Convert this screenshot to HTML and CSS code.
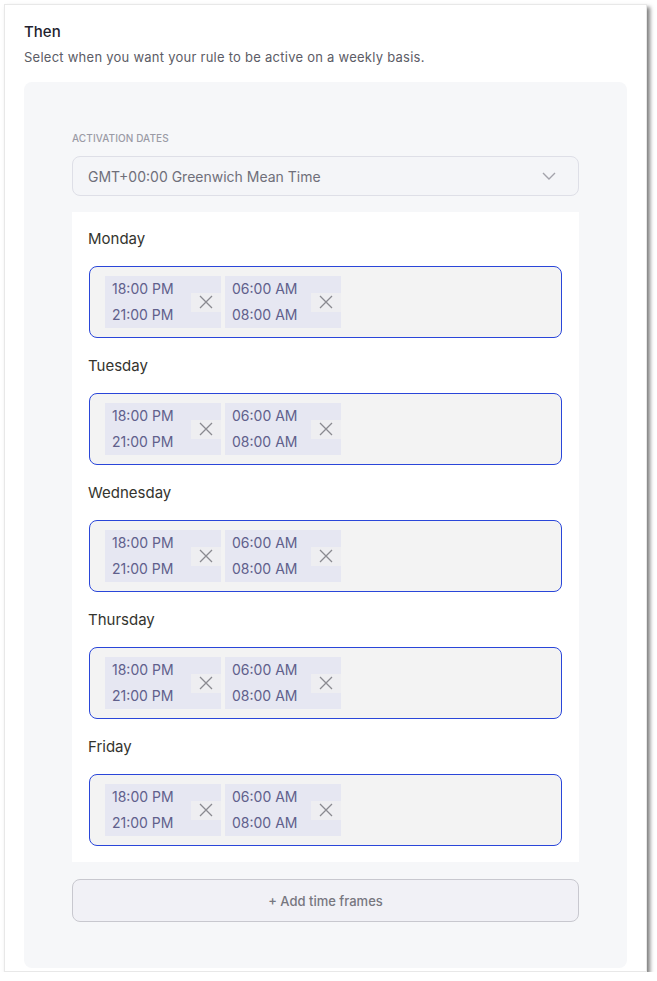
FILE: index.html
```html
<!DOCTYPE html>
<html>
<head>
<meta charset="utf-8">
<link rel="stylesheet" href="styles.css">
</head>
<body>
<div class="card">
  <h1 class="title">Then</h1>
  <p class="subtitle">Select when you want your rule to be active on a weekly basis.</p>
  <div class="panel">
    <div class="label">ACTIVATION DATES</div>
    <div class="select">
      <span>GMT+00:00 Greenwich Mean Time</span>
      <svg class="chev" width="14" height="8" viewBox="0 0 14 8"><path d="M1 1 L7 7 L13 1" fill="none" stroke="#a3a3ab" stroke-width="1.4"/></svg>
    </div>
    <div class="days">
      <div class="day">
        <div class="day-name">Monday</div>
        <div class="slots">
          <div class="chip"><div class="times"><span>18:00 PM</span><span>21:00 PM</span></div><span class="x"><svg width="14" height="14" viewBox="0 0 14 14"><path d="M1 1L13 13M13 1L1 13" stroke="#8a8a90" stroke-width="1.3"/></svg></span></div>
          <div class="chip"><div class="times"><span>06:00 AM</span><span>08:00 AM</span></div><span class="x"><svg width="14" height="14" viewBox="0 0 14 14"><path d="M1 1L13 13M13 1L1 13" stroke="#8a8a90" stroke-width="1.3"/></svg></span></div>
        </div>
      </div>
      <div class="day">
        <div class="day-name">Tuesday</div>
        <div class="slots">
          <div class="chip"><div class="times"><span>18:00 PM</span><span>21:00 PM</span></div><span class="x"><svg width="14" height="14" viewBox="0 0 14 14"><path d="M1 1L13 13M13 1L1 13" stroke="#8a8a90" stroke-width="1.3"/></svg></span></div>
          <div class="chip"><div class="times"><span>06:00 AM</span><span>08:00 AM</span></div><span class="x"><svg width="14" height="14" viewBox="0 0 14 14"><path d="M1 1L13 13M13 1L1 13" stroke="#8a8a90" stroke-width="1.3"/></svg></span></div>
        </div>
      </div>
      <div class="day">
        <div class="day-name">Wednesday</div>
        <div class="slots">
          <div class="chip"><div class="times"><span>18:00 PM</span><span>21:00 PM</span></div><span class="x"><svg width="14" height="14" viewBox="0 0 14 14"><path d="M1 1L13 13M13 1L1 13" stroke="#8a8a90" stroke-width="1.3"/></svg></span></div>
          <div class="chip"><div class="times"><span>06:00 AM</span><span>08:00 AM</span></div><span class="x"><svg width="14" height="14" viewBox="0 0 14 14"><path d="M1 1L13 13M13 1L1 13" stroke="#8a8a90" stroke-width="1.3"/></svg></span></div>
        </div>
      </div>
      <div class="day">
        <div class="day-name">Thursday</div>
        <div class="slots">
          <div class="chip"><div class="times"><span>18:00 PM</span><span>21:00 PM</span></div><span class="x"><svg width="14" height="14" viewBox="0 0 14 14"><path d="M1 1L13 13M13 1L1 13" stroke="#8a8a90" stroke-width="1.3"/></svg></span></div>
          <div class="chip"><div class="times"><span>06:00 AM</span><span>08:00 AM</span></div><span class="x"><svg width="14" height="14" viewBox="0 0 14 14"><path d="M1 1L13 13M13 1L1 13" stroke="#8a8a90" stroke-width="1.3"/></svg></span></div>
        </div>
      </div>
      <div class="day">
        <div class="day-name">Friday</div>
        <div class="slots">
          <div class="chip"><div class="times"><span>18:00 PM</span><span>21:00 PM</span></div><span class="x"><svg width="14" height="14" viewBox="0 0 14 14"><path d="M1 1L13 13M13 1L1 13" stroke="#8a8a90" stroke-width="1.3"/></svg></span></div>
          <div class="chip"><div class="times"><span>06:00 AM</span><span>08:00 AM</span></div><span class="x"><svg width="14" height="14" viewBox="0 0 14 14"><path d="M1 1L13 13M13 1L1 13" stroke="#8a8a90" stroke-width="1.3"/></svg></span></div>
        </div>
      </div>
    </div>
    <div class="add">+ Add time frames</div>
  </div>
</div>
</body>
</html>
```

FILE: styles.css
```css
html, body {
  margin: 0;
  padding: 0;
  background: #ffffff;
}
body {
  font-family: Inter, "Noto Sans", sans-serif;
  padding: 4px 0 0 4px;
}
.card {
  box-sizing: border-box;
  width: 643px;
  height: 968px;
  background: #ffffff;
  border: 1px solid #e8e8e8;
  box-shadow: 3px 3px 4px rgba(0, 0, 0, 0.5);
  padding: 17px 19px 0 19px;
}
.title {
  margin: 0;
  font-size: 15px;
  line-height: 20px;
  font-weight: 500;
  color: #22222e;
}
.subtitle {
  margin: 6px 0 0 0;
  font-size: 13px;
  line-height: 18px;
  letter-spacing: 0.25px;
  color: #5c5c66;
}
.panel {
  margin-top: 16px;
  height: 886px;
  box-sizing: border-box;
  background: #f6f7f9;
  border-radius: 8px;
  padding: 50px 48px 0 48px;
}
.label {
  font-size: 10px;
  line-height: 12px;
  letter-spacing: 0.1px;
  font-weight: 500;
  color: #9b9ba6;
}
.select {
  margin-top: 12px;
  box-sizing: border-box;
  height: 40px;
  border: 1px solid #dedfe7;
  border-radius: 8px;
  background: #f4f5f8;
  display: flex;
  align-items: center;
  justify-content: space-between;
  padding: 0 22px 0 15px;
  font-size: 14px;
  color: #6f6f7a;
}
.days {
  margin-top: 16px;
  background: #ffffff;
  padding: 17px 17px 16px 16px;
}
.day-name {
  font-size: 15px;
  line-height: 20px;
  color: #34342e;
}
.day + .day {
  margin-top: 18px;
}
.slots {
  margin: 17px 0 0 1px;
  box-sizing: border-box;
  height: 72px;
  border: 1px solid #2a46d9;
  border-radius: 8px;
  background: #f3f3f3;
  padding: 9px 15px;
  display: flex;
  gap: 4px;
}
.chip {
  width: 116px;
  height: 52px;
  background: #e6e7f2;
  display: flex;
  align-items: center;
  justify-content: space-between;
}
.times {
  display: flex;
  flex-direction: column;
  padding-left: 7px;
  font-size: 14px;
  line-height: 26px;
  color: #60608c;
}
.x {
  width: 30px;
  height: 19px;
  background: #eeeef1;
  display: flex;
  align-items: center;
  justify-content: center;
}
.add {
  margin-top: 17px;
  box-sizing: border-box;
  height: 43px;
  border: 1px solid #c8c8cf;
  border-radius: 8px;
  background: #f1f1f6;
  display: flex;
  align-items: center;
  justify-content: center;
  font-size: 13px;
  font-weight: 500;
  color: #77777f;
}
```
